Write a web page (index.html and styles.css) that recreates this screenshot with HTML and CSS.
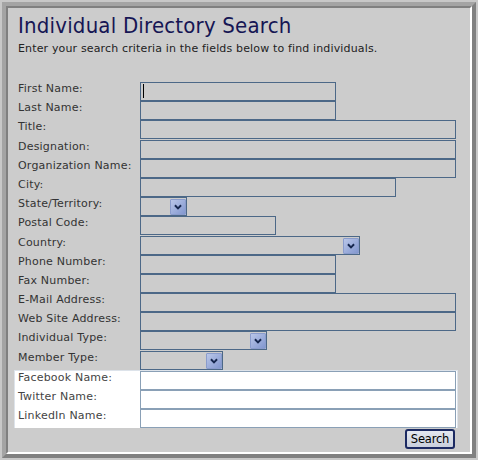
FILE: index.html
```html
<!DOCTYPE html>
<html lang="en">
<head>
    <meta charset="UTF-8">
    <meta name="viewport" content="width=device-width, initial-scale=1.0">
    <title>Individual Directory Search</title>
    <link rel="stylesheet" href="styles.css">
</head>
<body>
    <div class="frame">
        <div class="panel">
            <h1 class="title">Individual Directory Search</h1>
            <p class="intro">Enter your search criteria in the fields below to find individuals.</p>

            <form class="search-form">
                <!-- Main criteria -->
                <div class="fields">
                    <label class="label" for="firstName">First Name:</label>
                    <span class="field"><input class="text w-short" id="firstName" type="text"><span class="caret"></span></span>

                    <label class="label" for="lastName">Last Name:</label>
                    <span class="field"><input class="text w-short" id="lastName" type="text"></span>

                    <label class="label" for="title">Title:</label>
                    <span class="field"><input class="text w-long" id="title" type="text"></span>

                    <label class="label" for="designation">Designation:</label>
                    <span class="field"><input class="text w-long" id="designation" type="text"></span>

                    <label class="label" for="orgName">Organization Name:</label>
                    <span class="field"><input class="text w-long" id="orgName" type="text"></span>

                    <label class="label" for="city">City:</label>
                    <span class="field"><input class="text w-city" id="city" type="text"></span>

                    <label class="label">State/Territory:</label>
                    <span class="field"><span class="select w-state"><span class="drop"><svg viewBox="0 0 16 16" width="14" height="14"><polyline points="4.5,6 8,9.5 11.5,6" /></svg></span></span></span>

                    <label class="label" for="postal">Postal Code:</label>
                    <span class="field"><input class="text w-postal" id="postal" type="text"></span>

                    <label class="label">Country:</label>
                    <span class="field"><span class="select w-country"><span class="drop"><svg viewBox="0 0 16 16" width="14" height="14"><polyline points="4.5,6 8,9.5 11.5,6" /></svg></span></span></span>

                    <label class="label" for="phone">Phone Number:</label>
                    <span class="field"><input class="text w-short" id="phone" type="text"></span>

                    <label class="label" for="fax">Fax Number:</label>
                    <span class="field"><input class="text w-short" id="fax" type="text"></span>

                    <label class="label" for="email">E-Mail Address:</label>
                    <span class="field"><input class="text w-long" id="email" type="text"></span>

                    <label class="label" for="website">Web Site Address:</label>
                    <span class="field"><input class="text w-long" id="website" type="text"></span>

                    <label class="label">Individual Type:</label>
                    <span class="field"><span class="select w-indtype"><span class="drop"><svg viewBox="0 0 16 16" width="14" height="14"><polyline points="4.5,6 8,9.5 11.5,6" /></svg></span></span></span>

                    <label class="label">Member Type:</label>
                    <span class="field"><span class="select w-memtype"><span class="drop"><svg viewBox="0 0 16 16" width="14" height="14"><polyline points="4.5,6 8,9.5 11.5,6" /></svg></span></span></span>
                </div>

                <!-- Social networks -->
                <div class="fields social">
                    <label class="label" for="facebook">Facebook Name:</label>
                    <span class="field"><input class="text w-long" id="facebook" type="text"></span>

                    <label class="label" for="twitter">Twitter Name:</label>
                    <span class="field"><input class="text w-long" id="twitter" type="text"></span>

                    <label class="label" for="linkedin">LinkedIn Name:</label>
                    <span class="field"><input class="text w-long" id="linkedin" type="text"></span>
                </div>

                <div class="actions">
                    <button class="search-btn" type="button">Search</button>
                </div>
            </form>
        </div>
    </div>
</body>
</html>
```

FILE: styles.css
```css
body {
    margin: 0;
    background: #c8c8c8;
    font-family: "DejaVu Sans", sans-serif;
    color: #333;
}
.frame {
    margin: 2px;
    height: 456px;
    box-sizing: border-box;
    border: 4px solid;
    border-color: #a4a4a4 #808080 #808080 #a4a4a4;
}
.panel {
    height: 100%;
    box-sizing: border-box;
    border: 2px solid;
    border-color: #808080 #fff #fff #808080;
    background: #cccccc;
    padding: 5px 10px 0 10px;
}
.title {
    margin: 0;
    font-family: "DejaVu Sans Condensed", "DejaVu Sans", sans-serif;
    font-stretch: condensed;
    font-size: 22px;
    line-height: 26px;
    font-weight: normal;
    letter-spacing: 0.2px;
    color: #161654;
}
.intro {
    margin: 3px 0 0;
    font-size: 11px;
    line-height: 14px;
    letter-spacing: 0.15px;
    color: #222;
}
.search-form {
    margin-top: 26px;
}
.fields {
    display: grid;
    grid-template-columns: 122px 1fr;
    grid-auto-rows: 19.2px;
}
.label {
    font-size: 11px;
    line-height: 14px;
    letter-spacing: 0.2px;
    white-space: nowrap;
}
.field {
    position: relative;
    display: block;
}
.text {
    display: block;
    box-sizing: border-box;
    height: 19px;
    margin: 0;
    padding: 0 3px;
    border: 1px solid #4c6887;
    background: transparent;
    font: inherit;
    font-size: 11px;
    outline: none;
}
.caret {
    position: absolute;
    left: 3px;
    top: 2px;
    width: 1px;
    height: 14px;
    background: #000;
}
.select {
    display: flex;
    justify-content: flex-end;
    box-sizing: border-box;
    height: 19px;
    border: 1px solid #4c6887;
}
.drop {
    display: flex;
    align-items: center;
    justify-content: center;
    box-sizing: border-box;
    width: 16px;
    height: 16px;
    margin-top: 1px;
    border: 1px solid #8a9ccc;
    border-radius: 1px;
    background: linear-gradient(135deg, #b9c6e8, #8297cf);
}
.drop svg polyline {
    fill: none;
    stroke: #15264d;
    stroke-width: 2.2;
}
.w-short { width: 196px; }
.w-long { width: 316px; }
.w-city { width: 256px; }
.w-postal { width: 136px; }
.w-state { width: 47px; }
.w-country { width: 220px; }
.w-indtype { width: 127px; }
.w-memtype { width: 83px; }

.social {
    grid-auto-rows: 19px;
    margin: 0 2px 0 -4px;
    padding: 0 0 0 3px;
    border: 1px solid #dde3ea;
    border-bottom: 0;
    background: #fff;
}
.social .text {
    border-color: #8aa0b6;
}
.social .label {
    color: #444;
}
.actions {
    display: flex;
    justify-content: flex-end;
    padding: 1px 5px 0 0;
}
.search-btn {
    height: 20px;
    width: 50px;
    padding: 0;
    border: 2px solid #1c2a62;
    border-radius: 3px;
    background: linear-gradient(#e4e8f0, #c9cfdc);
    font-family: inherit;
    font-size: 11.5px;
    letter-spacing: -0.2px;
    color: #000;
    cursor: pointer;
}
```
